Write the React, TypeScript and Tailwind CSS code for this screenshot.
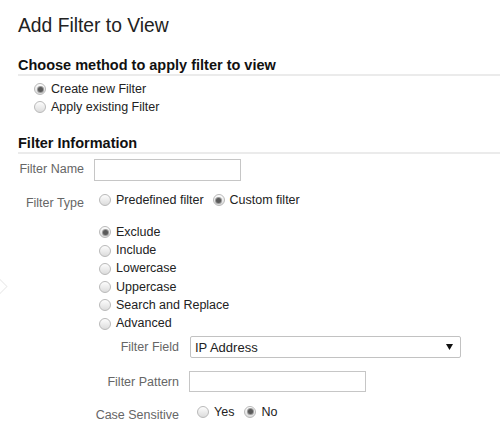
import { useState } from "react"

type RadioProps = {
  checked: boolean
  label: string
  onSelect: () => void
}

// old-style grey radio knob
function Radio({ checked, label, onSelect }: RadioProps) {
  return (
    <label className="flex items-center gap-[5px] cursor-default" onClick={onSelect}>
      <span className="w-[12px] h-[12px] shrink-0 rounded-full border border-[#b9b9b9] bg-linear-to-b from-[#fdfdfd] to-[#dcdcdc] flex items-center justify-center">
        {checked && <span className="w-[5px] h-[5px] rounded-full bg-[#5a5a5a] shadow-[0_0_0_1px_#9a9a9a]" />}
      </span>
      <span className="text-[#222] whitespace-nowrap">{label}</span>
    </label>
  )
}

const filterKinds = ["Exclude", "Include", "Lowercase", "Uppercase", "Search and Replace", "Advanced"]

export default function App() {
  const [method, setMethod] = useState("new")
  const [filterType, setFilterType] = useState("custom")
  const [kind, setKind] = useState("Exclude")
  const [caseSensitive, setCaseSensitive] = useState(false)

  return (
    <div className="relative w-[500px] h-[430px] overflow-hidden bg-white pl-[18px] font-['Liberation_Sans',Arial,sans-serif] text-[12.5px]">
      {/* faint panel arrow peeking in from the left */}
      <div className="absolute left-[-8px] top-[280px] w-[13px] h-[13px] rotate-45 border border-[#ececec] bg-white" />

      <h1 className="mt-[14px] text-[19.3px] leading-[24px] text-[#222]">Add Filter to View</h1>

      <h2 className="mt-[18px] text-[14.5px] leading-[18px] font-bold text-[#111] border-b-2 border-[#ebebeb]">
        Choose method to apply filter to view
      </h2>
      <div className="mt-[4px] pl-[16px]">
        <div className="h-[18.3px] flex items-center">
          <Radio checked={method === "new"} label="Create new Filter" onSelect={() => setMethod("new")} />
        </div>
        <div className="h-[18.3px] flex items-center">
          <Radio checked={method === "existing"} label="Apply existing Filter" onSelect={() => setMethod("existing")} />
        </div>
      </div>

      <h2 className="mt-[17.5px] text-[14.5px] leading-[18px] font-bold text-[#111] border-b-2 border-[#ebebeb]">
        Filter Information
      </h2>

      <div className="mt-[4.5px] flex items-center">
        <span className="w-[66px] text-right text-[#666]">Filter Name</span>
        <input className="ml-[10px] w-[147px] h-[22px] border border-[#c6c6c6] outline-none px-1" />
      </div>

      <div className="mt-[11px] h-[18px] flex items-center">
        <span className="w-[66px] text-right text-[#666] pt-[5px]">Filter Type</span>
        <div className="ml-[15px] flex items-center gap-[9px] pb-[1px]">
          <Radio checked={filterType === "predefined"} label="Predefined filter" onSelect={() => setFilterType("predefined")} />
          <Radio checked={filterType === "custom"} label="Custom filter" onSelect={() => setFilterType("custom")} />
        </div>
      </div>

      <div className="mt-[13.5px] ml-[75px]">
        <div className="pl-[6px]">
          {filterKinds.map((k) => (
            <div key={k} className="h-[18.3px] flex items-center">
              <Radio checked={kind === k} label={k} onSelect={() => setKind(k)} />
            </div>
          ))}
        </div>

        <div className="mt-[3.5px] flex items-center">
          <span className="w-[86px] text-right text-[#666] whitespace-nowrap">Filter Field</span>
          <div className="ml-[11px] w-[271px] h-[22px] border border-[#c2c2c2] rounded-[2px] bg-white flex items-center justify-between pl-[4px] pr-[7px]">
            <span className="text-[13px] text-[#222]">IP Address</span>
            <svg width="7" height="6" viewBox="0 0 7 6">
              <path d="M0 0h7L3.5 6z" fill="#111" />
            </svg>
          </div>
        </div>

        <div className="mt-[13px] flex items-center">
          <span className="w-[86px] text-right text-[#666] whitespace-nowrap">Filter Pattern</span>
          <input className="ml-[10px] w-[177px] h-[21px] border border-[#c6c6c6] outline-none px-1" />
        </div>

        <div className="mt-[11px] h-[18px] flex items-center">
          <span className="w-[86px] text-right text-[#666] whitespace-nowrap pt-[6px]">Case Sensitive</span>
          <div className="ml-[18px] flex items-center gap-[10px] pb-[1px]">
            <Radio checked={caseSensitive} label="Yes" onSelect={() => setCaseSensitive(true)} />
            <Radio checked={!caseSensitive} label="No" onSelect={() => setCaseSensitive(false)} />
          </div>
        </div>
      </div>
    </div>
  )
}
